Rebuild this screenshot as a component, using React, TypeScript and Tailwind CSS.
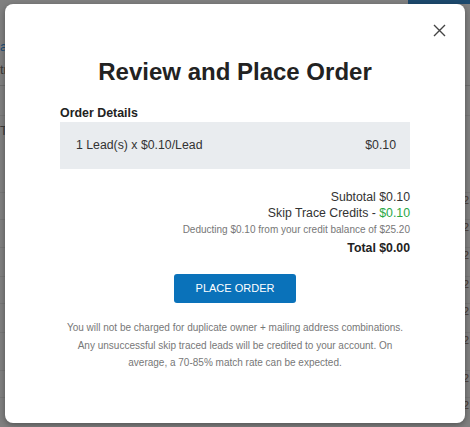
import React from 'react';

const rows = [192, 219, 247, 276, 303, 332, 370, 397];

function Backdrop() {
  return (
    <div className="absolute inset-0 bg-[#808080]">
      <div className="h-[4px] ml-[408px] bg-[#1d4a6e]" />
      <div className="pl-0 pt-[34px] text-[13px] text-[#1d4f7a] leading-[18px]">a</div>
      <div className="pt-[5px] text-[13px] text-[#3b3b3b] leading-[18px]">tr</div>
      <div className="mt-[6px] border-t border-[#6e6e6e]" />
      <div className="mt-[29px] border-t border-[#777]" />
      <div className="pt-[6px] text-[13px] text-[#3b3b3b] leading-[18px]">T</div>
      {rows.map((y) => (
        <div
          key={y}
          className="absolute left-0 right-0 border-t border-[#777] flex justify-end"
          style={{ top: y }}
        >
          <span className="text-[11px] leading-[14px] pr-[1px] text-[#4a3b33]">2</span>
        </div>
      ))}
    </div>
  );
}

export default function App() {
  return (
    <div className="relative w-[470px] h-[427px] overflow-hidden font-['Liberation_Sans',Arial,sans-serif]">
      <Backdrop />
      <div className="absolute left-[5px] top-[4px] w-[460px] h-[419px] bg-white rounded-[8px] shadow-[0_2px_6px_rgba(0,0,0,0.35)]">
        <button className="absolute right-[19px] top-[19px] w-[14px] h-[14px] flex items-center justify-center text-[#444]">
          <svg width="13" height="13" viewBox="0 0 13 13" fill="none" stroke="currentColor" strokeWidth="1.4">
            <path d="M1 1L12 12M12 1L1 12" />
          </svg>
        </button>

        <div className="flex flex-col px-[55px] pt-[53px]">
          <h2 className="text-center text-[24px] leading-[30px] font-bold text-[#222]">
            Review and Place Order
          </h2>

          <div className="mt-[19px] text-[12.4px] leading-[15px] font-bold text-[#222]">Order Details</div>
          <div className="mt-[1px] h-[47px] bg-[#e9ecef] flex items-center justify-between pl-[16px] pr-[14px] text-[12.3px] text-[#333]">
            <span>1 Lead(s) x $0.10/Lead</span>
            <span>$0.10</span>
          </div>

          <div className="mt-[20px] flex flex-col items-end text-[#333]">
            <div className="text-[12.3px] leading-[16px]">Subtotal $0.10</div>
            <div className="text-[12.3px] leading-[16px]">
              Skip Trace Credits - <span className="text-[#28a745]">$0.10</span>
            </div>
            <div className="text-[10px] leading-[14px] mt-[2px] text-[#777]">
              Deducting $0.10 from your credit balance of $25.20
            </div>
            <div className="text-[12.3px] leading-[16px] mt-[3px] font-bold text-[#222]">Total $0.00</div>
          </div>

          <div className="mt-[18px] flex justify-center">
            <button className="w-[122px] h-[29px] rounded-[3px] bg-[#0a72ba] text-white text-[11px]">
              PLACE ORDER
            </button>
          </div>

          <p className="mt-[16px] text-center text-[10px] leading-[17.5px] text-[#777] px-[4px]">
            You will not be charged for duplicate owner + mailing address combinations. Any
            unsuccessful skip traced leads will be credited to your account. On average, a 70-85%
            match rate can be expected.
          </p>
        </div>
      </div>
    </div>
  );
}
